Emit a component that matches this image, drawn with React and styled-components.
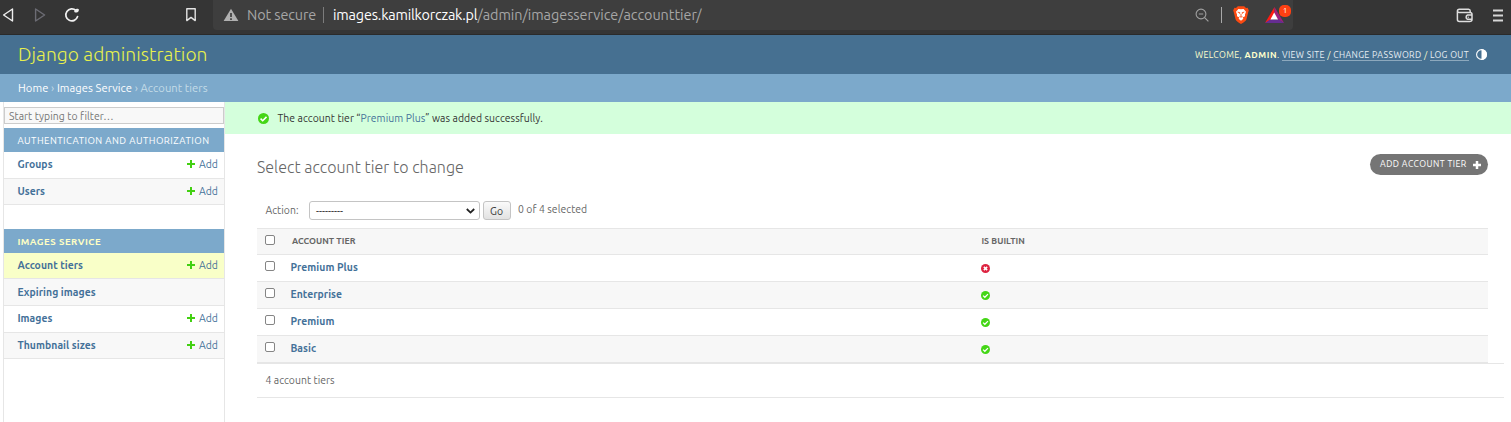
import React from 'react';
import styled, { createGlobalStyle } from 'styled-components';

const GlobalStyle = createGlobalStyle`
  * { box-sizing: border-box; }
  body {
    margin: 0;
    height: 422px;
    overflow: hidden;
    background: #fff;
    color: #666;
    font: 10.4px/16px "Ubuntu", "Noto Sans", "Open Sans", sans-serif;
  }
  a { color: #447199; text-decoration: none; }
`;

const Text = styled.span`
  white-space: nowrap;
  letter-spacing: ${p => p.$ls ?? 0.06}px;
`;

const BrowserBar = styled.div`
  height: 35px;
  background: #353535;
  border-bottom: 1px solid #2a2a2a;
  display: flex;
  align-items: flex-start;
  padding: 0 8px 0 2px;
`;
const NavButtons = styled.div`
  display: flex;
  align-items: center;
  height: 30px;
  width: 211px;
`;
const NavGap = styled.div`flex: 0 0 ${p => p.$w}px;`;
const AddressBar = styled.div`
  width: 1080px;
  height: 30px;
  background: #3e3e3e;
  border-radius: 0 0 4px 4px;
  display: flex;
  align-items: center;
  padding: 0 0 0 10px;
  font-size: 14.4px;
  line-height: 30px;
  color: #a6a6a6;
`;
const Secure = styled(Text)`margin-left: 8px; flex: 0 0 76px;`;
const Divider = styled.i`flex: 0 0 1px; height: 16px; background: ${p => p.$c};`;
const Url = styled(Text)`
  margin-left: 9px;
  flex: 1;
  b { font-weight: 400; color: #fff; letter-spacing: ${p => p.$hostLs}px; }
`;
const Extensions = styled.div`display: flex; align-items: center;`;
const RewardsIcon = styled.div`position: relative; width: 28px; height: 30px; margin-left: 16px; padding-top: 7px; line-height: 0;`;
const Badge = styled.span`
  position: absolute;
  right: 2px;
  top: 5px;
  width: 12px;
  height: 12px;
  border-radius: 5px;
  background: #ff4012;
  color: #fff;
  font-size: 8px;
  line-height: 12px;
  text-align: center;
`;
const BarTools = styled.div`
  margin-left: auto;
  height: 30px;
  display: flex;
  align-items: center;
  gap: 20px;
`;

const Header = styled.header`
  height: 39px;
  background: #467091;
  display: flex;
  align-items: center;
  justify-content: space-between;
  padding: 0 24px 0 18px;
`;
const Branding = styled.h1`
  margin: 0;
  font-size: 19.2px;
  font-weight: 300;
  line-height: 39px;
  color: #e8f04c;
`;
const UserTools = styled.div`
  display: flex;
  align-items: center;
  height: 39px;
  font-size: 8.8px;
  line-height: 12px;
  color: #ffc;
  svg { margin-left: 7px; }
  b { letter-spacing: 0.6px; }
`;
const ToolLink = styled.a`
  && { color: #e6eef4; }
  border-bottom: 1px solid #8ca8bd;
`;
const Breadcrumbs = styled.nav`
  height: 28px;
  background: #7ca9cb;
  color: #c4dce8;
  padding: 0 18px;
  font-size: 11.2px;
  line-height: 28px;
  a { color: #fff; }
`;

const Layout = styled.div`display: flex; height: 320px;`;
const Sidebar = styled.aside`
  width: 222px;
  margin-left: 3px;
  border: 1px solid #e6e6e6;
  border-width: 0 1px;
  padding-top: 5px;
`;
const Filter = styled.input`
  display: block;
  width: 220px;
  height: 17px;
  margin: 0 0 4px;
  padding: 0 4px;
  border: 1px solid #ccc;
  border-radius: 0;
  background: #f8f8f8;
  font: inherit;
  letter-spacing: 0.08px;
  &::placeholder { color: #757575; opacity: 1; }
`;
const Module = styled.section`margin-bottom: 24px;`;
const Caption = styled.h2`
  margin: 0;
  height: 24px;
  padding: 0 13px 0 13.4px;
  background: #7ca9cb;
  color: ${p => (p.$active ? '#ffffc4' : '#fff')};
  font-size: 9.6px;
  font-weight: ${p => (p.$active ? 700 : 400)};
  line-height: 25px;
`;
const ModelRow = styled.div`
  display: flex;
  justify-content: space-between;
  height: ${p => p.$h}px;
  padding: ${p => p.$top || 0}px 6px 0 13.4px;
  border-bottom: 1px solid #e6e6e6;
  background: ${p => p.$bg};
  line-height: 25px;
  a:first-child { font-weight: 700; }
`;
const AddLink = styled.a`
  display: flex;
  align-items: center;
  gap: 4px;
  height: 24px;
  line-height: 24px;
`;

const Main = styled.main`flex: 1; min-width: 0;`;
const Message = styled.div`
  height: 32px;
  background: #d4ffdc;
  color: #333;
  display: flex;
  align-items: center;
  gap: 8.5px;
  padding: 0 0 0 33px;
`;
const Content = styled.div`padding: 20px 7px 0 32px;`;
const TitleRow = styled.div`
  display: flex;
  justify-content: space-between;
  align-items: flex-start;
  height: 47px;
  padding-right: 16px;
`;
const Title = styled.h2`
  margin: 0;
  font-size: 16px;
  line-height: 27px;
  font-weight: 300;
  color: #666;
`;
const AddButton = styled.a`
  display: flex;
  align-items: center;
  justify-content: space-between;
  width: 118px;
  height: 21px;
  padding: 0 7px 0 10px;
  border-radius: 11px;
  background: #757575;
  && { color: #fff; }
  font-size: 8.8px;
  line-height: 21px;
`;
const Actions = styled.div`
  display: flex;
  align-items: flex-start;
  height: 27px;
  padding-left: 8.4px;
  line-height: 18px;
`;
const ActionLabel = styled(Text)`width: 43.6px;`;
const Select = styled.div`
  width: 171px;
  height: 19px;
  padding: 0 4px 0 6px;
  display: flex;
  align-items: center;
  justify-content: space-between;
  border: 1px solid #c4c4c4;
  border-radius: 3px;
  background: #fff;
  color: #222;
`;
const GoButton = styled.button`
  width: 28px;
  height: 19px;
  margin: 0 7px 0 3px;
  padding: 0 1px 1px 0;
  border: 1px solid #c4c4c4;
  border-radius: 3px;
  background: linear-gradient(#fafafa, #e2e2e2);
  font: inherit;
  color: #333;
`;
const Counter = styled(Text)`line-height: 17px;`;

const Table = styled.div`margin-right: 16px; border-top: 1px solid #e6e6e6;`;
const Row = styled.div`
  display: grid;
  grid-template-columns: 33.4px 690.6px 1fr;
  align-items: center;
  height: ${p => (p.$head ? 26 : 27)}px;
  padding-bottom: 2px;
  border-bottom: 1px solid #e6e6e6;
  background: ${p => (p.$shade ? '#f7f7f7' : '#fff')};
  font-weight: 700;
  svg { margin-top: 2px; }
`;
const HeadCell = styled(Text)`
  font-size: 8.8px;
  padding-left: ${p => p.$pad}px;
  color: #666;
`;
const Checkbox = styled.input`
  appearance: none;
  width: 10px;
  height: 10px;
  margin: ${p => p.$top}px 0 0 8px;
  border: 1px solid #858585;
  border-radius: 2px;
  background: #fff;
`;
const Paginator = styled.div`
  height: 35px;
  padding-left: 8.4px;
  border-top: 1px solid #e6e6e6;
  border-bottom: 1px solid #e6e6e6;
  line-height: 32px;
`;

const Plus = ({ size = 8, color = '#43d012', w = 2 }) => (
  <svg width={size} height={size} viewBox="0 0 8 8">
    <path d="M4 0V8M0 4H8" stroke={color} strokeWidth={w} />
  </svg>
);
const Yes = ({ size }) => (
  <svg width={size} height={size} viewBox="0 0 12 12">
    <circle cx="6" cy="6" r="6" fill="#44d616" />
    <path d="M2.8 6.2 5.1 8.4 9.3 4.2" fill="none" stroke="#fff" strokeWidth="1.7" />
  </svg>
);
const No = () => (
  <svg width="9" height="9" viewBox="0 0 12 12">
    <circle cx="6" cy="6" r="6" fill="#dd2340" />
    <path d="M3.8 3.8 8.2 8.2M8.2 3.8 3.8 8.2" stroke="#fff" strokeWidth="2" />
  </svg>
);

const groups = [
  {
    name: 'AUTHENTICATION AND AUTHORIZATION', ls: 0.47,
    rows: [
      { name: 'Groups', h: 27, bg: '#fff', add: true },
      { name: 'Users', h: 26, bg: '#f8f8f8', add: true },
    ],
  },
  {
    name: 'IMAGES SERVICE', ls: 0.5, active: true,
    rows: [
      { name: 'Account tiers', h: 26, bg: '#f9ffc8', add: true },
      { name: 'Expiring images', h: 27, top: 1, bg: '#f8f8f8' },
      { name: 'Images', h: 27, bg: '#fff', add: true },
      { name: 'Thumbnail sizes', h: 26, bg: '#f8f8f8', add: true },
    ],
  },
];
const tiers = [
  { name: 'Premium Plus', builtin: false },
  { name: 'Enterprise', builtin: true },
  { name: 'Premium', builtin: true },
  { name: 'Basic', builtin: true },
];

const Browser = () => (
  <BrowserBar>
    <NavButtons>
      <svg width="12" height="16" viewBox="0 0 12 16"><path d="M10.5 2V14L1.6 8Z" fill="none" stroke="#eee" strokeWidth="1.4" strokeLinejoin="round" /></svg>
      <NavGap $w={20} />
      <svg width="12" height="16" viewBox="0 0 12 16"><path d="M1.6 2V14L10.6 8Z" fill="none" stroke="#6c6c74" strokeWidth="1.4" strokeLinejoin="round" /></svg>
      <NavGap $w={18} />
      <svg width="16" height="16" viewBox="0 0 16 16">
        <path d="M12 3.6A6 6 0 1 0 13.6 9.6" fill="none" stroke="#f0f0f0" strokeWidth="1.7" strokeLinecap="round" />
        <path d="M10.2 4.9C10.4 2.4 12.3 1.1 14.8 2.3C15.3 4.9 13.2 6.4 10.2 4.9Z" fill="#f0f0f0" />
      </svg>
      <NavGap $w={105} />
      <svg width="12" height="16" viewBox="0 0 12 16"><path d="M1.8 1.8H10.2V13.6L6 10.4L1.8 13.6Z" fill="none" stroke="#e4e4e4" strokeWidth="1.4" strokeLinejoin="round" /></svg>
    </NavButtons>
    <AddressBar>
      <svg width="16" height="14" viewBox="0 0 16 14"><path d="M8 .8 15.4 13H.6Z" fill="#b0b0b0" /><path d="M8 5V9M8 10.2V12" stroke="#3e3e3e" strokeWidth="1.7" /></svg>
      <Secure $ls={-0.1}>Not secure</Secure>
      <Divider $c="#7c7c7c" />
      <Url $ls={-0.03} $hostLs={-0.17}><b>images.kamilkorczak.pl</b>/admin/imagesservice/accounttier/</Url>
      <Extensions>
        <svg width="14" height="14" viewBox="0 0 14 14"><circle cx="6" cy="6" r="4.9" fill="none" stroke="#a0a0a0" strokeWidth="1.1" /><path d="M3.8 6H8.2M9.6 9.6 13.4 13.4" stroke="#a0a0a0" strokeWidth="1.2" /></svg>
        <NavGap $w={12} />
        <Divider $c="#a8a8a8" />
        <NavGap $w={11} />
        <svg width="16" height="18" viewBox="0 0 16 18">
          <path d="M4.8.2H11.2L13 2 14.6 1.8 15.8 4.6 15.2 6.2 13.4 13.4Q12.8 15 8 17.9Q3.2 15 2.6 13.4L.8 6.2.2 4.6 1.4 1.8 3 2Z" fill="#fb4a12" />
          <path d="M8 3.3 10.6 2.9 13 5.8 12 8.4 12 10.2 9.6 11.5 10.4 12.8 8 14.8 5.6 12.8 6.4 11.5 4 10.2 4 8.4 3 5.8 5.4 2.9Z" fill="#fff" />
          <path d="M4.7 6.1 7 6.8 6.6 7.8M11.3 6.1 9 6.8 9.4 7.8M6.6 10.5 8 11.1 9.4 10.5M8 8V10.6" fill="none" stroke="#fb4a12" strokeWidth=".9" />
        </svg>
        <RewardsIcon>
          <svg width="19" height="16" viewBox="0 0 19 16">
            <path d="M9.5 0 0 16 9.5 11Z" fill="#ff1b12" />
            <path d="M9.5 0 19 16 9.5 11Z" fill="#a0207c" />
            <path d="M0 16H19L14 12.5H5Z" fill="#662d91" />
            <path d="M9.2 5.5 13 12.5H5.4Z" fill="#fff" />
          </svg>
          <Badge>1</Badge>
        </RewardsIcon>
      </Extensions>
    </AddressBar>
    <BarTools>
      <svg width="17" height="15" viewBox="0 0 17 15">
        <path d="M14.2 4.3V3Q14.2 1.2 12.6 1.2H3.4Q1.4 1.2 1.4 3.2V11.6Q1.4 13.6 3.4 13.6H13.6Q16 13.6 16 11.6V6.2Q16 4.4 14 4.4H3Q1.6 4.2 1.4 3M16 7H11.6A2.3 2.3 0 0 0 11.6 11.3H16" fill="none" stroke="#dedede" strokeWidth="1.5" />
        <path d="M11.6 9.2H13" stroke="#dedede" strokeWidth="1" />
      </svg>
      <svg width="10" height="13" viewBox="0 0 10 13"><path d="M0 1.5H10M0 6.5H10M0 11.5H10" stroke="#d6d6d6" strokeWidth="1.8" /></svg>
    </BarTools>
  </BrowserBar>
);

export default function App() {
  return (
    <>
      <GlobalStyle />
      <Browser />
      <Header>
        <Branding><Text $ls={0.05}>Django administration</Text></Branding>
        <UserTools>
          <Text $ls={0.36}>
            WELCOME, <b>ADMIN</b>. <ToolLink>VIEW SITE</ToolLink> / <ToolLink>CHANGE PASSWORD</ToolLink> / <ToolLink>LOG OUT</ToolLink>
          </Text>
          <svg width="11" height="11" viewBox="0 0 11 11"><circle cx="5.5" cy="5.5" r="4.9" fill="none" stroke="#fff" strokeWidth="1.1" /><path d="M5.5 0A5.5 5.5 0 0 1 5.5 11Z" fill="#fff" /></svg>
        </UserTools>
      </Header>
      <Breadcrumbs>
        <Text><a>Home</a> › <a>Images Service</a> › Account tiers</Text>
      </Breadcrumbs>
      <Layout>
        <Sidebar>
          <Filter placeholder="Start typing to filter…" />
          {groups.map(g => (
            <Module key={g.name}>
              <Caption $active={g.active}><Text $ls={g.ls}>{g.name}</Text></Caption>
              {g.rows.map(r => (
                <ModelRow key={r.name} $h={r.h} $bg={r.bg} $top={r.top}>
                  <a><Text>{r.name}</Text></a>
                  {r.add && <AddLink><Plus /><Text>Add</Text></AddLink>}
                </ModelRow>
              ))}
            </Module>
          ))}
        </Sidebar>
        <Main>
          <Message>
            <Yes size={11} />
            <Text>The account tier “<a>Premium Plus</a>” was added successfully.</Text>
          </Message>
          <Content>
            <TitleRow>
              <Title><Text $ls={0.04}>Select account tier to change</Text></Title>
              <AddButton><Text $ls={0.42}>ADD ACCOUNT TIER</Text><Plus size={8} color="#fff" w={2.5} /></AddButton>
            </TitleRow>
            <Actions>
              <ActionLabel>Action:</ActionLabel>
              <Select>
                <Text $ls={0}>---------</Text>
                <svg width="9" height="6" viewBox="0 0 9 6"><path d="M.8 1 4.5 4.6 8.2 1" fill="none" stroke="#222" strokeWidth="1.8" /></svg>
              </Select>
              <GoButton>Go</GoButton>
              <Counter>0 of 4 selected</Counter>
            </Actions>
            <Table>
              <Row $head $shade>
                <Checkbox type="checkbox" $top={-1} />
                <HeadCell $pad={1.6}>ACCOUNT TIER</HeadCell>
                <HeadCell $pad={0.4}>IS BUILTIN</HeadCell>
              </Row>
              {tiers.map((t, i) => (
                <Row key={t.name} $shade={i % 2 === 1}>
                  <Checkbox type="checkbox" $top={-2} />
                  <a><Text>{t.name}</Text></a>
                  {t.builtin ? <Yes size={9} /> : <No />}
                </Row>
              ))}
            </Table>
            <Paginator><Text>4 account tiers</Text></Paginator>
          </Content>
        </Main>
      </Layout>
    </>
  );
}
